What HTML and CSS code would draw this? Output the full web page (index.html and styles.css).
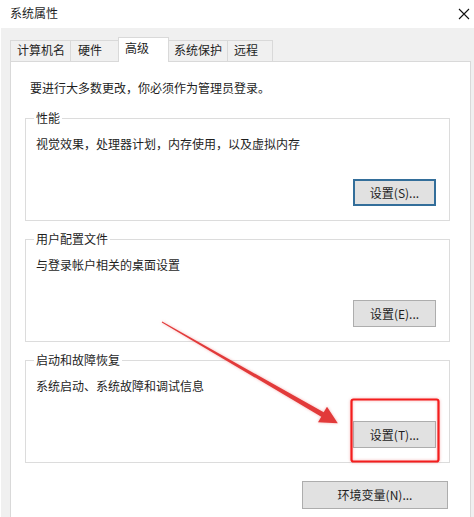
FILE: index.html
```html
<!DOCTYPE html>
<html lang="zh-CN">
<head>
<meta charset="utf-8">
<title>系统属性</title>
<link rel="stylesheet" href="styles.css">
</head>
<body>
<div class="window">
  <div class="titlebar">
    <span class="title">系统属性</span>
    <svg class="close" width="12" height="12" viewBox="0 0 12 12"><path d="M1 1 L11 11 M11 1 L1 11" stroke="#111" stroke-width="1.1" fill="none"/></svg>
  </div>
  <div class="body">
    <div class="tabs">
      <div class="tab tab-name">计算机名</div>
      <div class="tab tab-hw">硬件</div>
      <div class="tab tab-adv active">高级</div>
      <div class="tab tab-prot">系统保护</div>
      <div class="tab tab-remote">远程</div>
    </div>
    <div class="panel">
      <p class="note">要进行大多数更改，你必须作为管理员登录。</p>
      <fieldset class="group">
        <legend>性能</legend>
        <p class="desc">视觉效果，处理器计划，内存使用，以及虚拟内存</p>
        <div class="actions"><button class="btn btn-default">设置(S)...</button></div>
      </fieldset>
      <fieldset class="group">
        <legend>用户配置文件</legend>
        <p class="desc">与登录帐户相关的桌面设置</p>
        <div class="actions"><button class="btn">设置(E)...</button></div>
      </fieldset>
      <fieldset class="group">
        <legend>启动和故障恢复</legend>
        <p class="desc">系统启动、系统故障和调试信息</p>
        <div class="actions"><button class="btn">设置(T)...</button></div>
      </fieldset>
      <div class="footer"><button class="btn btn-wide">环境变量(N)...</button></div>
    </div>
  </div>
  <svg class="annot" width="474" height="517" viewBox="0 0 474 517">
    <rect x="351.5" y="399.5" width="87" height="62" rx="2" fill="none" stroke="#f41d1d" stroke-width="2.2"/>
    <polygon points="162.2,321.6 323.7,412.3 327,406.7 337.8,423.3 318,422.3 321.3,416.7 161.8,322.4" fill="#e23a3a"/>
  </svg>
</div>
</body>
</html>
```

FILE: styles.css
```css
* { box-sizing: border-box; }

html, body {
  margin: 0;
  padding: 0;
}

body {
  width: 474px;
  height: 517px;
  overflow: hidden;
  background: #f0f0f0;
  font-family: "Noto Sans CJK SC", "Noto Sans", sans-serif;
  font-size: 12px;
  color: #1e1e1e;
}

.window {
  position: relative;
  width: 474px;
  height: 517px;
  overflow: hidden;
}

.titlebar {
  height: 28px;
  background: #ffffff;
  display: flex;
  align-items: center;
  justify-content: space-between;
  padding: 0 4px 2px 10px;
}

.title {
  line-height: 16px;
}

.close {
  display: block;
  margin-top: 1px;
}

.body {
  padding: 9px 0 0 2px;
  background: #f0f0f0;
  height: 489px;
  border-left: 1px solid #ffffff;
}

.tabs {
  display: flex;
  align-items: flex-end;
  height: 24px;
  margin-left: 7px;
}

.tab {
  height: 21px;
  border: 1px solid #d9d9d9;
  border-bottom: none;
  background: #f0f0f0;
  line-height: 18px;
  padding-left: 6px;
  margin-left: -1px;
  white-space: nowrap;
}

.tab-name { width: 61px; margin-left: 0; }
.tab-hw { width: 49px; padding-left: 7px; }
.tab-adv { width: 51px; }
.tab-prot { width: 60px; padding-left: 5px; }
.tab-remote { width: 46px; }

.tab.active {
  height: 25px;
  margin-bottom: -1px;
  background: #ffffff;
  position: relative;
  z-index: 1;
  padding-top: 1px;
  line-height: 18px;
}

.panel {
  margin-left: 7px;
  width: 461px;
  height: 470px;
  background: #ffffff;
  border: 1px solid #d9d9d9;
  padding: 0 20px 0 14px;
}

.note {
  margin: 18px 0 14px 5px;
  line-height: 16px;
}

.group {
  margin: 0 0 10px 0;
  padding: 0 13px 14px 10px;
  border: 1px solid #dcdcdc;
  min-width: 0;
}

.group legend {
  padding: 0 2px;
  margin-left: -2px;
  line-height: 16px;
}

.desc {
  margin: 10px 0 27px 0;
  line-height: 16px;
}

.actions {
  display: flex;
  justify-content: flex-end;
}

.btn {
  width: 83px;
  height: 27px;
  padding: 0;
  margin: 0;
  background: #e1e1e1;
  border: 1px solid #adadad;
  font-family: "Noto Sans CJK SC", "Noto Sans", sans-serif;
  font-size: 12px;
  color: #1e1e1e;
  line-height: 16px;
}

.btn-default {
  border: 2px solid #336e9a;
}

.footer {
  display: flex;
  justify-content: flex-end;
  margin-top: 18px;
  padding-right: 2px;
}

.btn-wide {
  width: 146px;
  height: 28px;
}

.annot {
  position: absolute;
  left: 0;
  top: 0;
  pointer-events: none;
  filter: drop-shadow(0 0 1.5px rgba(230, 80, 80, 0.45));
}
```
